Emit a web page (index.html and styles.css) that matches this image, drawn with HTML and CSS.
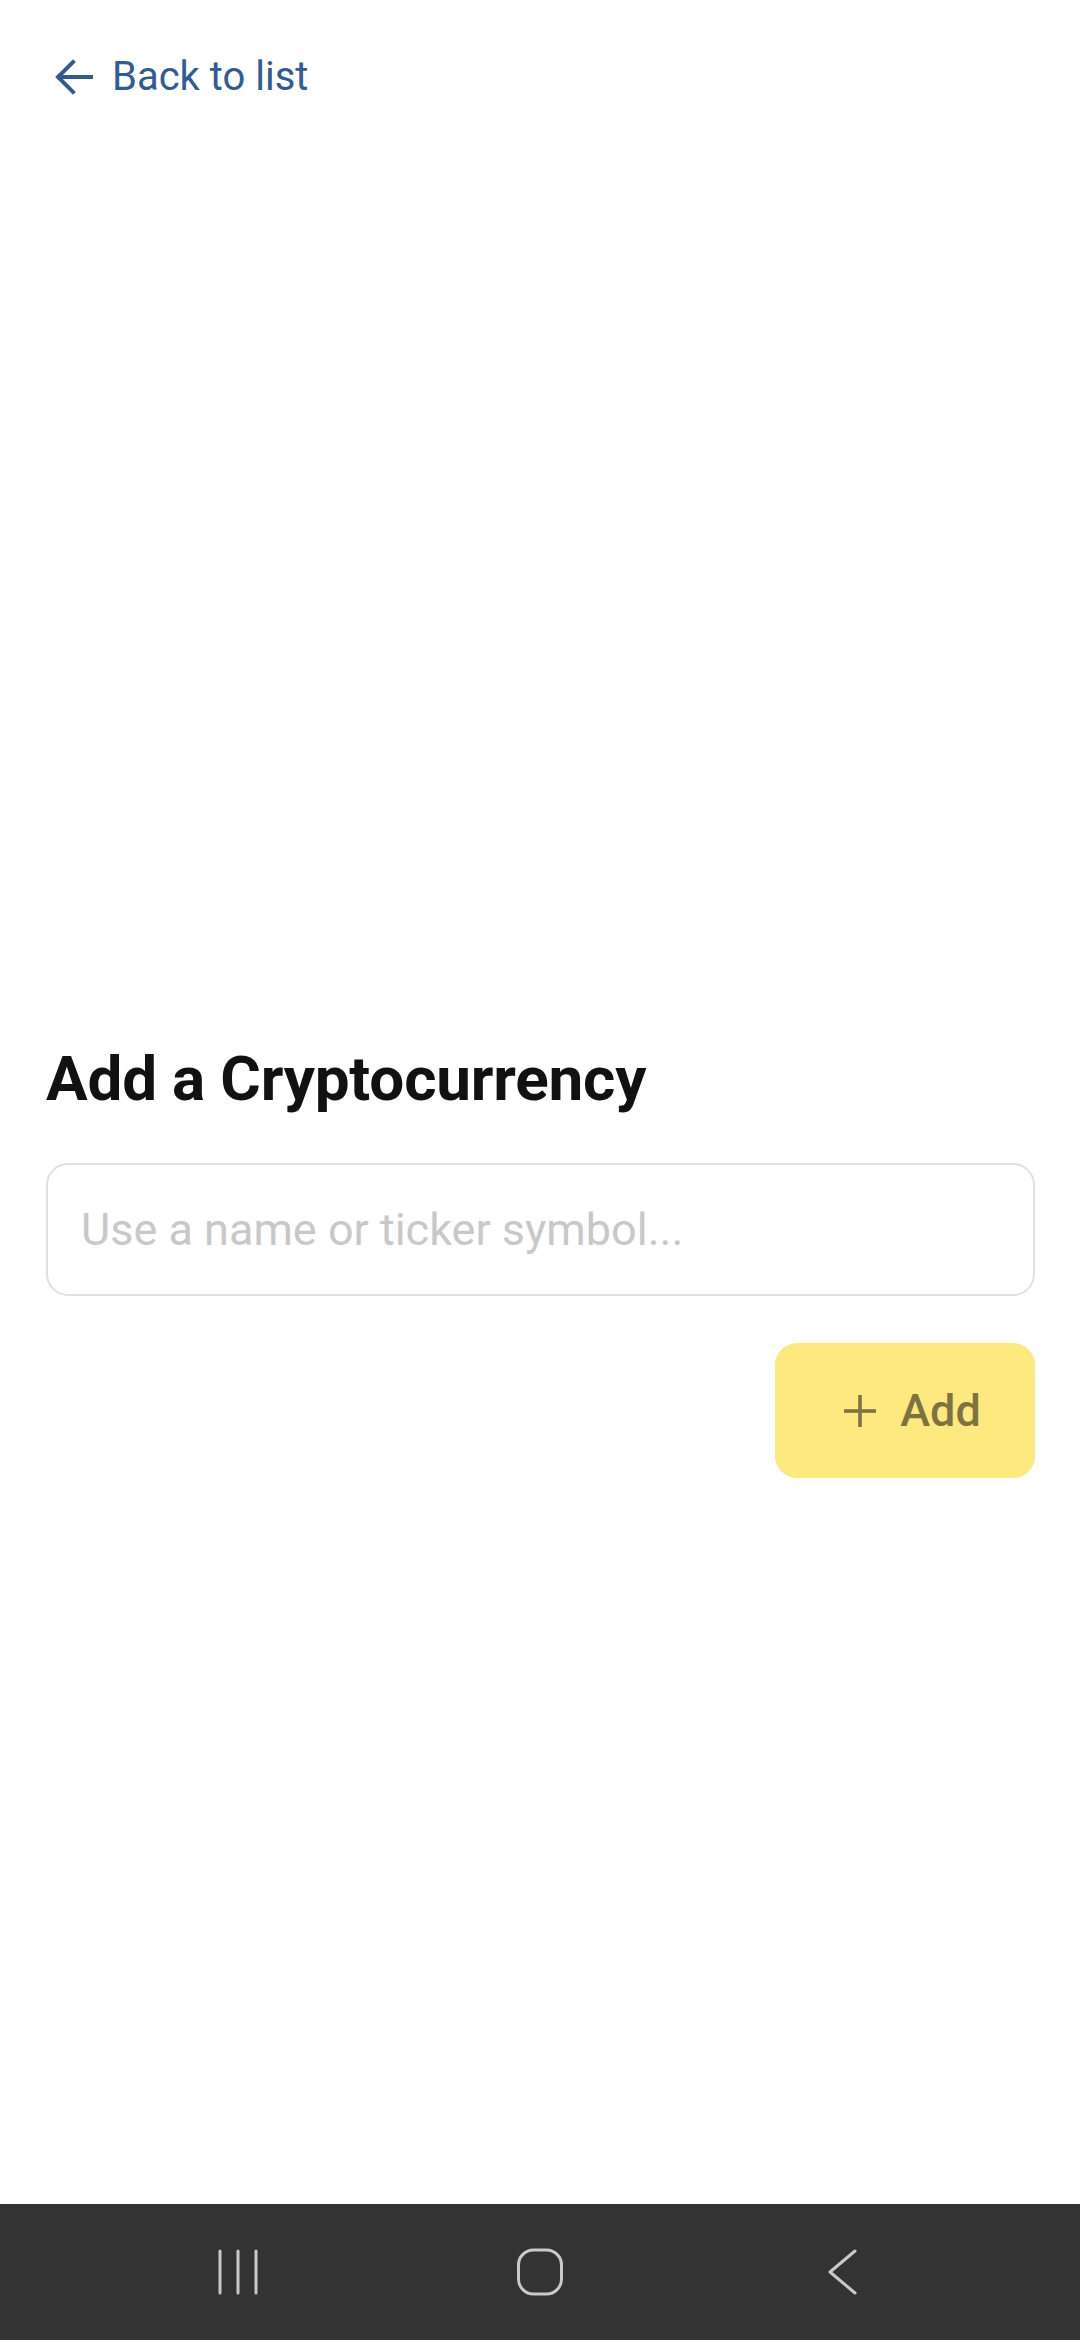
FILE: index.html
```html
<!DOCTYPE html>
<html lang="en">
<head>
<meta charset="utf-8">
<title>Add a Cryptocurrency</title>
<link rel="stylesheet" href="styles.css">
</head>
<body>
<div class="screen">
  <div class="page">
    <a class="back" href="#">
      <svg class="back-icon" width="38" height="36" viewBox="0 0 38 36" fill="none" stroke="currentColor" stroke-width="4" stroke-linecap="square">
        <path d="M36 18 H4"/>
        <path d="M18 3 L3 18 L18 33"/>
      </svg>
      <span>Back to list</span>
    </a>
    <section class="add">
      <h1 class="title">Add a Cryptocurrency</h1>
      <div class="field"><input class="input" type="text" placeholder="Use a name or ticker symbol..."></div>
      <div class="actions">
        <button class="btn" type="button">
          <svg class="plus" width="34" height="34" viewBox="0 0 34 34" fill="none" stroke="currentColor" stroke-width="3.6">
            <path d="M17 1 V33"/>
            <path d="M1 17 H33"/>
          </svg>
          <span>Add</span>
        </button>
      </div>
    </section>
  </div>
  <nav class="navbar">
    <div class="nav-item">
      <svg width="100" height="50" viewBox="0 0 100 50" fill="none" stroke="#c9c9c9" stroke-width="3" stroke-linecap="round">
        <path d="M32 4 V46"/><path d="M50 4 V46"/><path d="M68 4 V46"/>
      </svg>
    </div>
    <div class="nav-item">
      <svg width="100" height="50" viewBox="0 0 100 50" fill="none" stroke="#c9c9c9" stroke-width="3">
        <rect x="28.5" y="3" width="43" height="44" rx="15"/>
      </svg>
    </div>
    <div class="nav-item">
      <svg width="100" height="50" viewBox="0 0 100 50" fill="none" stroke="#c9c9c9" stroke-width="3" stroke-linecap="round" stroke-linejoin="round">
        <path d="M63 4 L38 25 L63 46"/>
      </svg>
    </div>
  </nav>
</div>
</body>
</html>
```
FILE: styles.css
```css
* { box-sizing: border-box; }
html, body { margin: 0; padding: 0; background: #ffffff; }
body { font-family: Roboto, "Noto Sans", "Liberation Sans", sans-serif; }

.screen {
  width: 1080px;
  height: 2340px;
  display: flex;
  flex-direction: column;
}

.page {
  flex: 1;
  display: flex;
  flex-direction: column;
  padding: 0 45px 0 46px;
}

.back {
  display: flex;
  align-items: center;
  gap: 19px;
  margin-top: 53px;
  margin-left: 9px;
  height: 48px;
  color: #335c8e;
  text-decoration: none;
  font-size: 40px;
  line-height: 48px;
  align-self: flex-start;
}
.back-icon { display: block; }

.add {
  margin-top: 941px;
  display: flex;
  flex-direction: column;
}

.title {
  margin: 0;
  font-size: 62px;
  line-height: 74px;
  font-weight: 700;
  color: #111111;
  letter-spacing: -0.2px;
}

.field { margin-top: 47px; }

.input {
  display: block;
  width: 100%;
  height: 133px;
  border: 2px solid #e0e0e0;
  border-radius: 22px;
  padding: 0 33px;
  font-family: Roboto, "Noto Sans", sans-serif;
  font-size: 45px;
  color: #222;
  background: #fff;
  outline: none;
}
.input::placeholder { color: #c8c8c8; }

.actions {
  margin-top: 47px;
  display: flex;
  justify-content: flex-end;
}

.btn {
  width: 260px;
  height: 135px;
  border: none;
  border-radius: 22px;
  background: #fee880;
  color: #7f7241;
  display: flex;
  align-items: center;
  justify-content: center;
  gap: 23px;
  padding: 0 0 0 14px;
  font-family: Roboto, "Noto Sans", sans-serif;
  font-size: 45px;
  font-weight: 500;
}
.plus { display: block; }

.navbar {
  height: 136px;
  background: #333333;
  display: flex;
  justify-content: center;
  align-items: center;
  gap: 202px;
}
.nav-item svg { display: block; }
```
